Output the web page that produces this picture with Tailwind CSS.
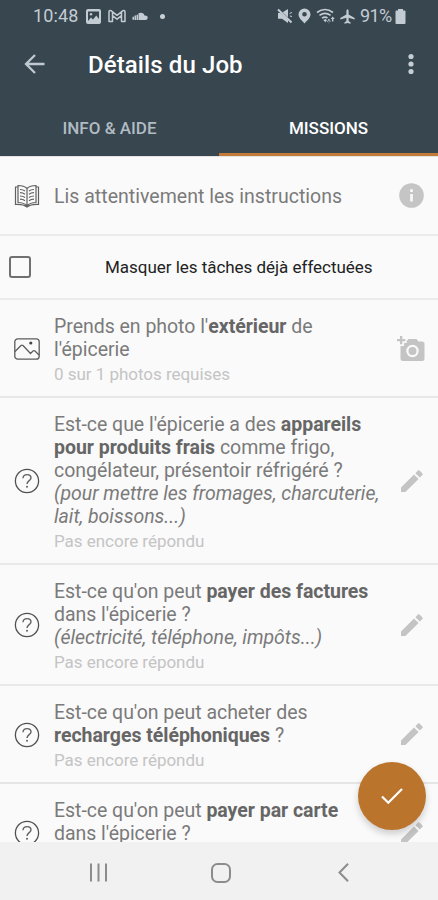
<!DOCTYPE html>
<html lang="fr">
<head>
<meta charset="utf-8">
<title>Détails du Job</title>
<script src="https://cdn.jsdelivr.net/npm/@tailwindcss/browser@4"></script>
</head>
<body class="w-[438px] h-[900px] overflow-hidden bg-[#fafafa] font-[Roboto,sans-serif] text-[#7a7a7a]">
<svg class="hidden">
  <symbol id="help" viewBox="0 0 26 26"><circle cx="13" cy="13" r="11.6" fill="none" stroke="#505050" stroke-width="1.3"/><path d="M9 10.2C9 7.800 10.700 6.600 13 6.600S17 7.900 17 10C17 12.700 13 12.700 13 16" fill="none" stroke="#606060" stroke-width="1.4"/><circle cx="13" cy="18.800" r="1" fill="#606060"/></symbol>
  <symbol id="pencil" viewBox="0 0 24 24"><path d="M1 18.600V23H5.400L18.600 10L14 5.400ZM15.400 4.200L19.800 8.600L22.400 6C22.900 5.500 22.900 5 22.400 4.500L19.500 1.600C19 1.100 18.500 1.100 18 1.600Z" fill="#c4c4c4"/></symbol>
</svg>
<div class="relative flex h-[900px] flex-col">
  <header class="h-[156px] shrink-0 bg-[#37464f]">
    <div class="flex h-8 items-center justify-between pl-[33px] pr-[32px] text-[#c4ccd3]">
      <div class="flex items-center">
        <span class="w-[46px] whitespace-nowrap text-[18px] leading-8 tracking-[0.15px]">10:48</span>
        <svg class="ml-[7px]" width="15" height="15" viewBox="0 0 15 15"><path fill-rule="evenodd" d="M2 0H13Q15 0 15 2V13Q15 15 13 15H2Q0 15 0 13V2Q0 0 2 0ZM2 2.500V12L5 8.500L7 10.500L10.300 6.500L13 10V2.500Z" fill="currentColor"/><circle cx="5" cy="5.200" r="1.200" fill="currentColor"/></svg>
        <svg class="ml-[7px]" width="18" height="14" viewBox="0 0 18 14"><path d="M1 12.500V3.200Q1 .8 3 1.600L9 6.300L15 1.600Q17 .8 17 3.200V12.500H13.500V6.700L9 10.200L4.500 6.700V12.500ZM4.500 6.700V3M13.500 6.700V3" fill="none" stroke="currentColor" stroke-width="1.500" stroke-linejoin="round"/></svg>
        <svg class="ml-[6px] mt-[1px]" width="16" height="9" viewBox="0 0 16 9"><path d="M6.500 8V1.300Q8.500 .2 10.300 .9Q12.200 1.600 12.500 3.500Q15.700 3.400 15.700 5.900Q15.500 8 13.500 8ZM4.500 2.800H6V8H4.500ZM2.500 3.600H4V8H2.500ZM.5 4.800H2V7.800H.5Z" fill="currentColor"/></svg>
        <span class="ml-[12px] size-[5px] rounded-full bg-[#c9d0d6]"></span>
      </div>
      <div class="flex items-center">
        <svg width="16" height="16" viewBox="0 0 16 16"><path d="M1 5H3.500L5.300 6.800L11 12V15L5 10.800H1ZM5.700 4.200L11 1V9.200Z" fill="currentColor"/><path d="M1 1.500L14.500 14.500" stroke="currentColor" stroke-width="2"/><path d="M12.600 5.500L15 4.500M12.800 8L15 8.500" stroke="currentColor" stroke-width="1"/></svg>
        <svg class="ml-[5px]" width="13" height="16" viewBox="0 0 13 16"><path fill-rule="evenodd" d="M6.500 .5A6 6 0 0 1 12.500 6.500C12.500 10 8.500 13 6.500 15.500C4.500 13 .5 10 .5 6.500A6 6 0 0 1 6.500 .5ZM6.500 4A2.300 2.300 0 1 0 6.500 8.600A2.300 2.300 0 1 0 6.500 4Z" fill="currentColor"/></svg>
        <svg class="ml-[5px]" width="20" height="16" viewBox="0 0 20 16"><path d="M1 4.500Q9 -1.500 17 4.500M3.500 7.400Q9 3.400 14.600 7.400M6 10.200Q9 8.200 11.500 10" fill="none" stroke="currentColor" stroke-width="1.600"/><path d="M7.300 12L9.500 11L11 12.300L9.300 14.200ZM12.200 11H13.600V15H12.200ZM10.800 12.800L12.900 15.600L15 12.800ZM16 9.500H17.400V13.500H16ZM14.700 11L16.700 8.500L18.700 11Z" fill="currentColor"/></svg>
        <svg class="ml-[4px]" width="15" height="15" viewBox="0 0 15 15"><path d="M6.400 2Q6.500 .3 7.500 .3T8.600 2V5.500L14.700 9V10.600L8.600 8.800V12L10.600 13.400V14.700L7.500 13.900L4.400 14.700V13.400L6.400 12V8.800L.3 10.600V9L6.400 5.500Z" fill="currentColor"/></svg>
        <span class="ml-[5px] w-[35px] whitespace-nowrap text-[18px] leading-8 tracking-[-0.6px]">91%</span>
        <svg width="11" height="15" viewBox="0 0 11 15"><path d="M3 0H8V1.500H9.500Q10.500 1.500 10.500 2.500V14Q10.500 15 9.500 15H1.500Q.5 15 .5 14V2.500Q.5 1.500 1.500 1.500H3Z" fill="currentColor"/></svg>
      </div>
    </div>
    <div class="flex h-[64px] items-center pl-6 pr-[23px]">
      <svg width="22" height="20" viewBox="0 0 22 20"><path d="M11 1L2 10L11 19M2 10H20.500" fill="none" stroke="#c0c9cf" stroke-width="2.300"/></svg>
      <h1 class="ml-[42px] mt-[2px] flex-1 whitespace-nowrap text-[24px] leading-8 font-medium tracking-[0.1px] text-white">Détails du Job</h1>
      <svg width="8" height="22" viewBox="0 0 8 22" fill="#c6ced3"><circle cx="4" cy="3.500" r="2.600"/><circle cx="4" cy="11" r="2.600"/><circle cx="4" cy="18.500" r="2.600"/></svg>
    </div>
    <nav class="grid h-[60px] grid-cols-2 text-center text-[17px] leading-[64px] font-medium whitespace-nowrap">
      <span class="h-[60px] text-[#b1bbc1]">INFO &amp; AIDE</span>
      <span class="h-[60px] border-b-[3px] border-[#c27b3a] text-white">MISSIONS</span>
    </nav>
  </header>
  <main class="h-[686px] overflow-hidden border-t border-[#e3e3e3] text-[19.500px] leading-[23px] tracking-[-0.03px] whitespace-nowrap">
    <section class="flex h-[79px] items-center border-b-2 border-[#ebebeb] pl-[14px] pr-[14px]">
      <svg width="26" height="24" viewBox="0 0 26 24" fill="none" stroke="#606060" stroke-width="1.200"><path d="M4 18.500V1.500Q10 1.500 13 4.500Q16 1.500 22 1.500V18.500Q16 18.500 13 22Q10 18.500 4 18.500ZM13 4.500V22M4 3H1.500V20.500Q9 20 13 23Q17 20 24.500 20.500V3H22"/><path d="M6 5.500Q9 5.500 11 7M6 8.700Q9 8.700 11 10.200M6 12Q9 12 11 13.500M6 15.200Q9 15.200 11 16.700M20 5.500Q17 5.500 15 7M20 8.700Q17 8.700 15 10.200M20 12Q17 12 15 13.500M20 15.200Q17 15.200 15 16.700"/></svg>
      <p class="ml-[14px] mt-[2px] flex-1 tracking-[0.02px]">Lis attentivement les instructions</p>
      <svg width="25" height="25" viewBox="0 0 25 25"><circle cx="12.500" cy="12.500" r="12.300" fill="#c5c5c5"/><path d="M11.200 11H13.800V18.500H11.200ZM11.200 6.300H13.800V8.900H11.200Z" fill="#fafafa"/></svg>
    </section>
    <label class="flex h-[64px] items-center border-b-2 border-[#ebebeb] pl-[9px] text-[17px] text-[#222]">
      <span class="size-[22px] rounded-[3px] border-2 border-[#707070]"></span>
      <span class="ml-[74px]">Masquer les tâches déjà effectuées</span>
    </label>
    <section class="flex h-[98px] items-center border-b-2 border-[#e7e7e7] px-[14px]">
      <svg class="mt-[1px]" width="26" height="22" viewBox="0 0 26 22" fill="none" stroke="#5c5c5c" stroke-width="1.300"><rect x=".8" y=".8" width="24.400" height="20.400" rx="3"/><path d="M1 13.500L7 7.500Q8 6.700 9 7.500L16.500 15.500L19 13Q20 12.300 21 13L25 17"/><circle cx="16.800" cy="5" r="1.600" fill="#444" stroke="none"/></svg>
      <div class="ml-[14px] flex-1 pt-[4px]">
        <p>Prends en photo l'<b class="font-bold text-[#666]">extérieur</b> de<br>l'épicerie</p>
        <p class="mt-[2px] text-[17px] text-[#c4c4c4]">0 sur 1 photos requises</p>
      </div>
      <svg class="-mr-[1px]" width="29" height="27" viewBox="0 0 29 27"><path fill-rule="evenodd" d="M4 1H6.300V4H9.300V6.300H6.300V9.300H4V6.300H1V4H4ZM12.500 4H20.500L22.500 6.500H26Q28.500 6.500 28.500 9V23.500Q28.500 26 26 26H7Q4.500 26 4.500 23.500V11H8V8H10.700V6ZM16.500 9.800A6.200 6.200 0 1 0 16.500 22.200A6.200 6.200 0 1 0 16.500 9.800ZM16.500 12A4 4 0 1 1 16.500 20A4 4 0 1 1 16.500 12Z" fill="#c4c4c4"/></svg>
    </section>
    <section class="flex h-[167px] items-center border-b-2 border-[#e9e9e9] px-[14px]">
      <svg class="mt-[1px] size-[26px] shrink-0"><use href="#help"/></svg>
      <div class="ml-[14px] w-0 flex-1 pt-[4px]">
        <p>Est-ce que l'épicerie a des <b class="font-bold text-[#666]">appareils<br>pour produits frais</b> comme frigo,<br>congélateur, présentoir réfrigéré ?<br><i>(pour mettre les fromages, charcuterie,<br>lait, boissons...)</i></p>
        <p class="mt-[2px] text-[17px] text-[#c4c4c4]">Pas encore répondu</p>
      </div>
      <svg class="size-6 shrink-0"><use href="#pencil"/></svg>
    </section>
    <section class="flex h-[121px] items-center border-b-2 border-[#e9e9e9] px-[14px]">
      <svg class="mt-[1px] size-[26px] shrink-0"><use href="#help"/></svg>
      <div class="ml-[14px] w-0 flex-1 pt-[4px]">
        <p>Est-ce qu'on peut <b class="font-bold text-[#666]">payer des factures</b><br>dans l'épicerie ?<br><i>(électricité, téléphone, impôts...)</i></p>
        <p class="mt-[2px] text-[17px] text-[#c4c4c4]">Pas encore répondu</p>
      </div>
      <svg class="size-6 shrink-0"><use href="#pencil"/></svg>
    </section>
    <section class="flex h-[98px] items-center border-b-2 border-[#e5e5e5] px-[14px]">
      <svg class="mt-[1px] size-[26px] shrink-0"><use href="#help"/></svg>
      <div class="ml-[14px] w-0 flex-1 pt-[4px]">
        <p>Est-ce qu'on peut acheter des<br><b class="font-bold text-[#666]">recharges téléphoniques</b> ?</p>
        <p class="mt-[2px] text-[17px] text-[#c4c4c4]">Pas encore répondu</p>
      </div>
      <svg class="size-6 shrink-0"><use href="#pencil"/></svg>
    </section>
    <section class="flex h-[98px] items-center px-[14px]">
      <svg class="size-[26px] shrink-0"><use href="#help"/></svg>
      <div class="ml-[14px] w-0 flex-1 self-start pt-[15px]">
        <p>Est-ce qu'on peut <b class="font-bold text-[#666]">payer par carte</b><br>dans l'épicerie ?</p>
      </div>
      <svg class="size-6 shrink-0"><use href="#pencil"/></svg>
    </section>
  </main>
  <button class="absolute left-[358px] top-[762px] flex size-[68px] items-center justify-center rounded-full bg-[#bb742b] shadow-[0_4px_7px_rgba(0,0,0,0.18)]">
    <svg width="22" height="18" viewBox="0 0 22 18"><path d="M1 9.500L7.300 15.800L21 2" fill="none" stroke="#fff" stroke-width="2.200"/></svg>
  </button>
  <footer class="relative flex h-[58px] shrink-0 items-center bg-[#f1f1f1] pt-[3px] pl-[89px]">
    <svg width="19" height="19" viewBox="0 0 19 19"><path d="M2 .5V18.500M9.500 .5V18.500M17 .5V18.500" stroke="#8c8c8c" stroke-width="2"/></svg>
    <svg class="ml-[103px]" width="20" height="20" viewBox="0 0 20 20"><rect x="1" y="1" width="18" height="18" rx="5.500" fill="none" stroke="#8c8c8c" stroke-width="2"/></svg>
    <svg class="ml-[107px]" width="11" height="19" viewBox="0 0 11 19"><path d="M10 .8L1.500 9.500L10 18.200" fill="none" stroke="#8c8c8c" stroke-width="2"/></svg>
  </footer>
</div>
</body>
</html>
